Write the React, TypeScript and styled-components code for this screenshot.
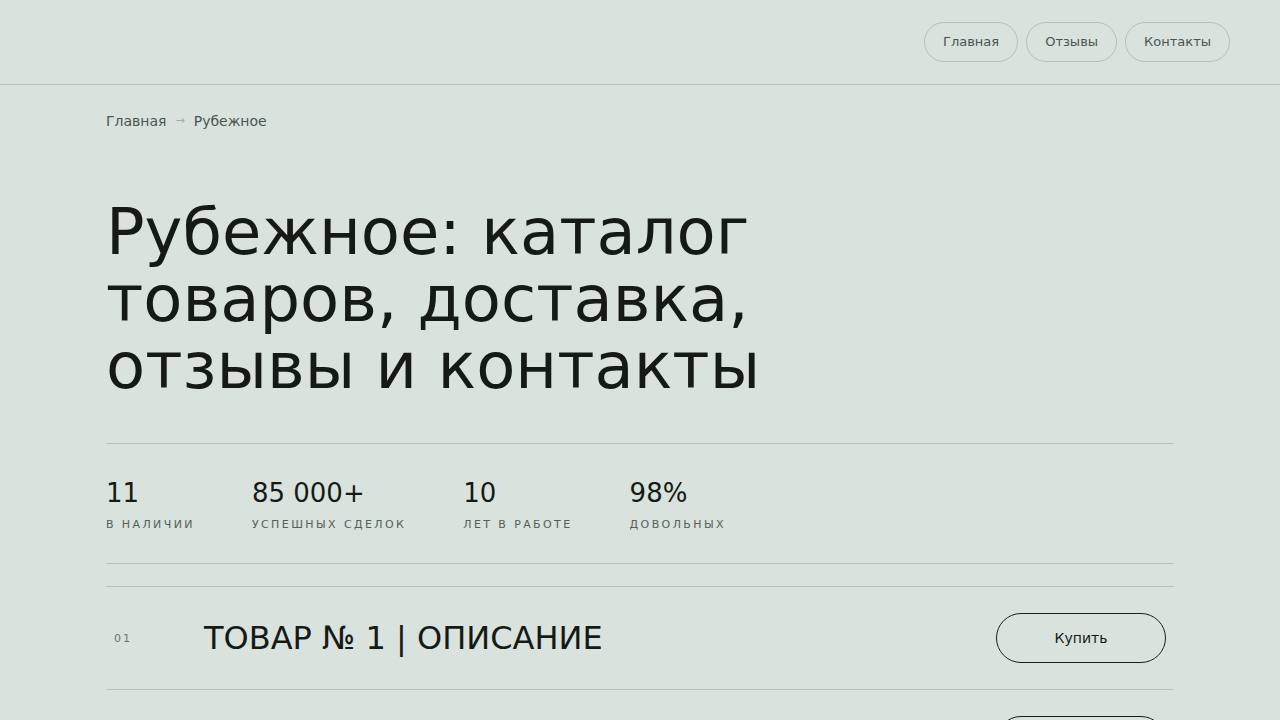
import styled, { createGlobalStyle } from "styled-components";

const GlobalStyle = createGlobalStyle`
  html, body {
    margin: 0;
    padding: 0;
    background: #d9e2dc;
  }
  body {
    font-family: "DejaVu Sans", "Noto Sans", sans-serif;
    color: #151a17;
  }
  * { box-sizing: border-box; }
`;

const navItems = ["Главная", "Отзывы", "Контакты"];

const stats = [
  { value: "11", label: "В наличии" },
  { value: "85 000+", label: "Успешных сделок" },
  { value: "10", label: "Лет в работе" },
  { value: "98%", label: "Довольных" },
];

const items = [
  { num: "01", title: "Товар № 1 | Описание" },
  { num: "02", title: "Товар № 2 | Описание" },
];

export default function App() {
  return (
    <Page>
      <GlobalStyle />
      <Header>
        <Nav>
          {navItems.map((n) => (
            <NavPill key={n}>{n}</NavPill>
          ))}
        </Nav>
      </Header>

      <Main>
        <Crumbs>
          <span>Главная</span>
          <CrumbArrow>→</CrumbArrow>
          <span>Рубежное</span>
        </Crumbs>

        <Title>
          Рубежное: каталог
          <br />
          товаров, доставка,
          <br />
          отзывы и контакты
        </Title>

        <Stats>
          {stats.map((s) => (
            <Stat key={s.label}>
              <StatValue>{s.value}</StatValue>
              <StatLabel>{s.label}</StatLabel>
            </Stat>
          ))}
        </Stats>

        <List>
          {items.map((it) => (
            <Row key={it.num}>
              <RowNum>{it.num}</RowNum>
              <RowTitle>{it.title}</RowTitle>
              <BuyButton>Купить</BuyButton>
            </Row>
          ))}
        </List>
      </Main>
    </Page>
  );
}

const Page = styled.div`
  min-height: 100vh;
  background: #d9e2dc;
`;

const Header = styled.header`
  display: flex;
  justify-content: flex-end;
  align-items: center;
  height: 85px;
  padding: 0 50px 1px;
  border-bottom: 1px solid #b9c4bd;
`;

const Nav = styled.nav`
  display: flex;
  gap: 8px;
`;

const NavPill = styled.a`
  display: flex;
  align-items: center;
  height: 40px;
  padding: 0 18px;
  border: 1px solid #b7c1ba;
  border-radius: 20px;
  font-size: 13px;
  color: #4a5550;
  cursor: pointer;
`;

const Main = styled.main`
  max-width: 1068px;
  margin: 0 auto;
`;

const Crumbs = styled.div`
  display: flex;
  align-items: center;
  gap: 9px;
  padding-top: 27px;
  font-size: 14px;
  line-height: 18px;
  color: #4a5550;
`;

const CrumbArrow = styled.span`
  font-size: 11px;
  color: #a3ada7;
`;

const Title = styled.h1`
  margin: 69px 0 0;
  padding-bottom: 43px;
  font-size: 64px;
  font-weight: 400;
  line-height: 67px;
  color: #151a17;
  border-bottom: 1px solid #b9c4bd;
`;

const Stats = styled.div`
  display: flex;
  gap: 57px;
  padding: 34px 0 32px;
  border-bottom: 1px solid #b9c4bd;
`;

const Stat = styled.div`
  display: flex;
  flex-direction: column;
  gap: 10px;
`;

const StatValue = styled.div`
  font-size: 26px;
  line-height: 30px;
  color: #151a17;
`;

const StatLabel = styled.div`
  font-size: 11px;
  letter-spacing: 2.4px;
  text-transform: uppercase;
  color: #55605a;
`;

const List = styled.div`
  margin-top: 22px;
  border-top: 1px solid #b9c4bd;
`;

const Row = styled.div`
  display: flex;
  align-items: center;
  height: 103px;
  padding: 0 8px;
  border-bottom: 1px solid #b9c4bd;
`;

const RowNum = styled.span`
  width: 90px;
  font-size: 11px;
  letter-spacing: 2px;
  color: #6d7771;
`;

const RowTitle = styled.div`
  flex: 1;
  font-size: 32px;
  text-transform: uppercase;
  color: #151a17;
`;

const BuyButton = styled.button`
  width: 170px;
  height: 50px;
  border: 1px solid #1a1f1c;
  border-radius: 25px;
  background: transparent;
  font-family: inherit;
  font-size: 14px;
  color: #151a17;
  cursor: pointer;
`;
